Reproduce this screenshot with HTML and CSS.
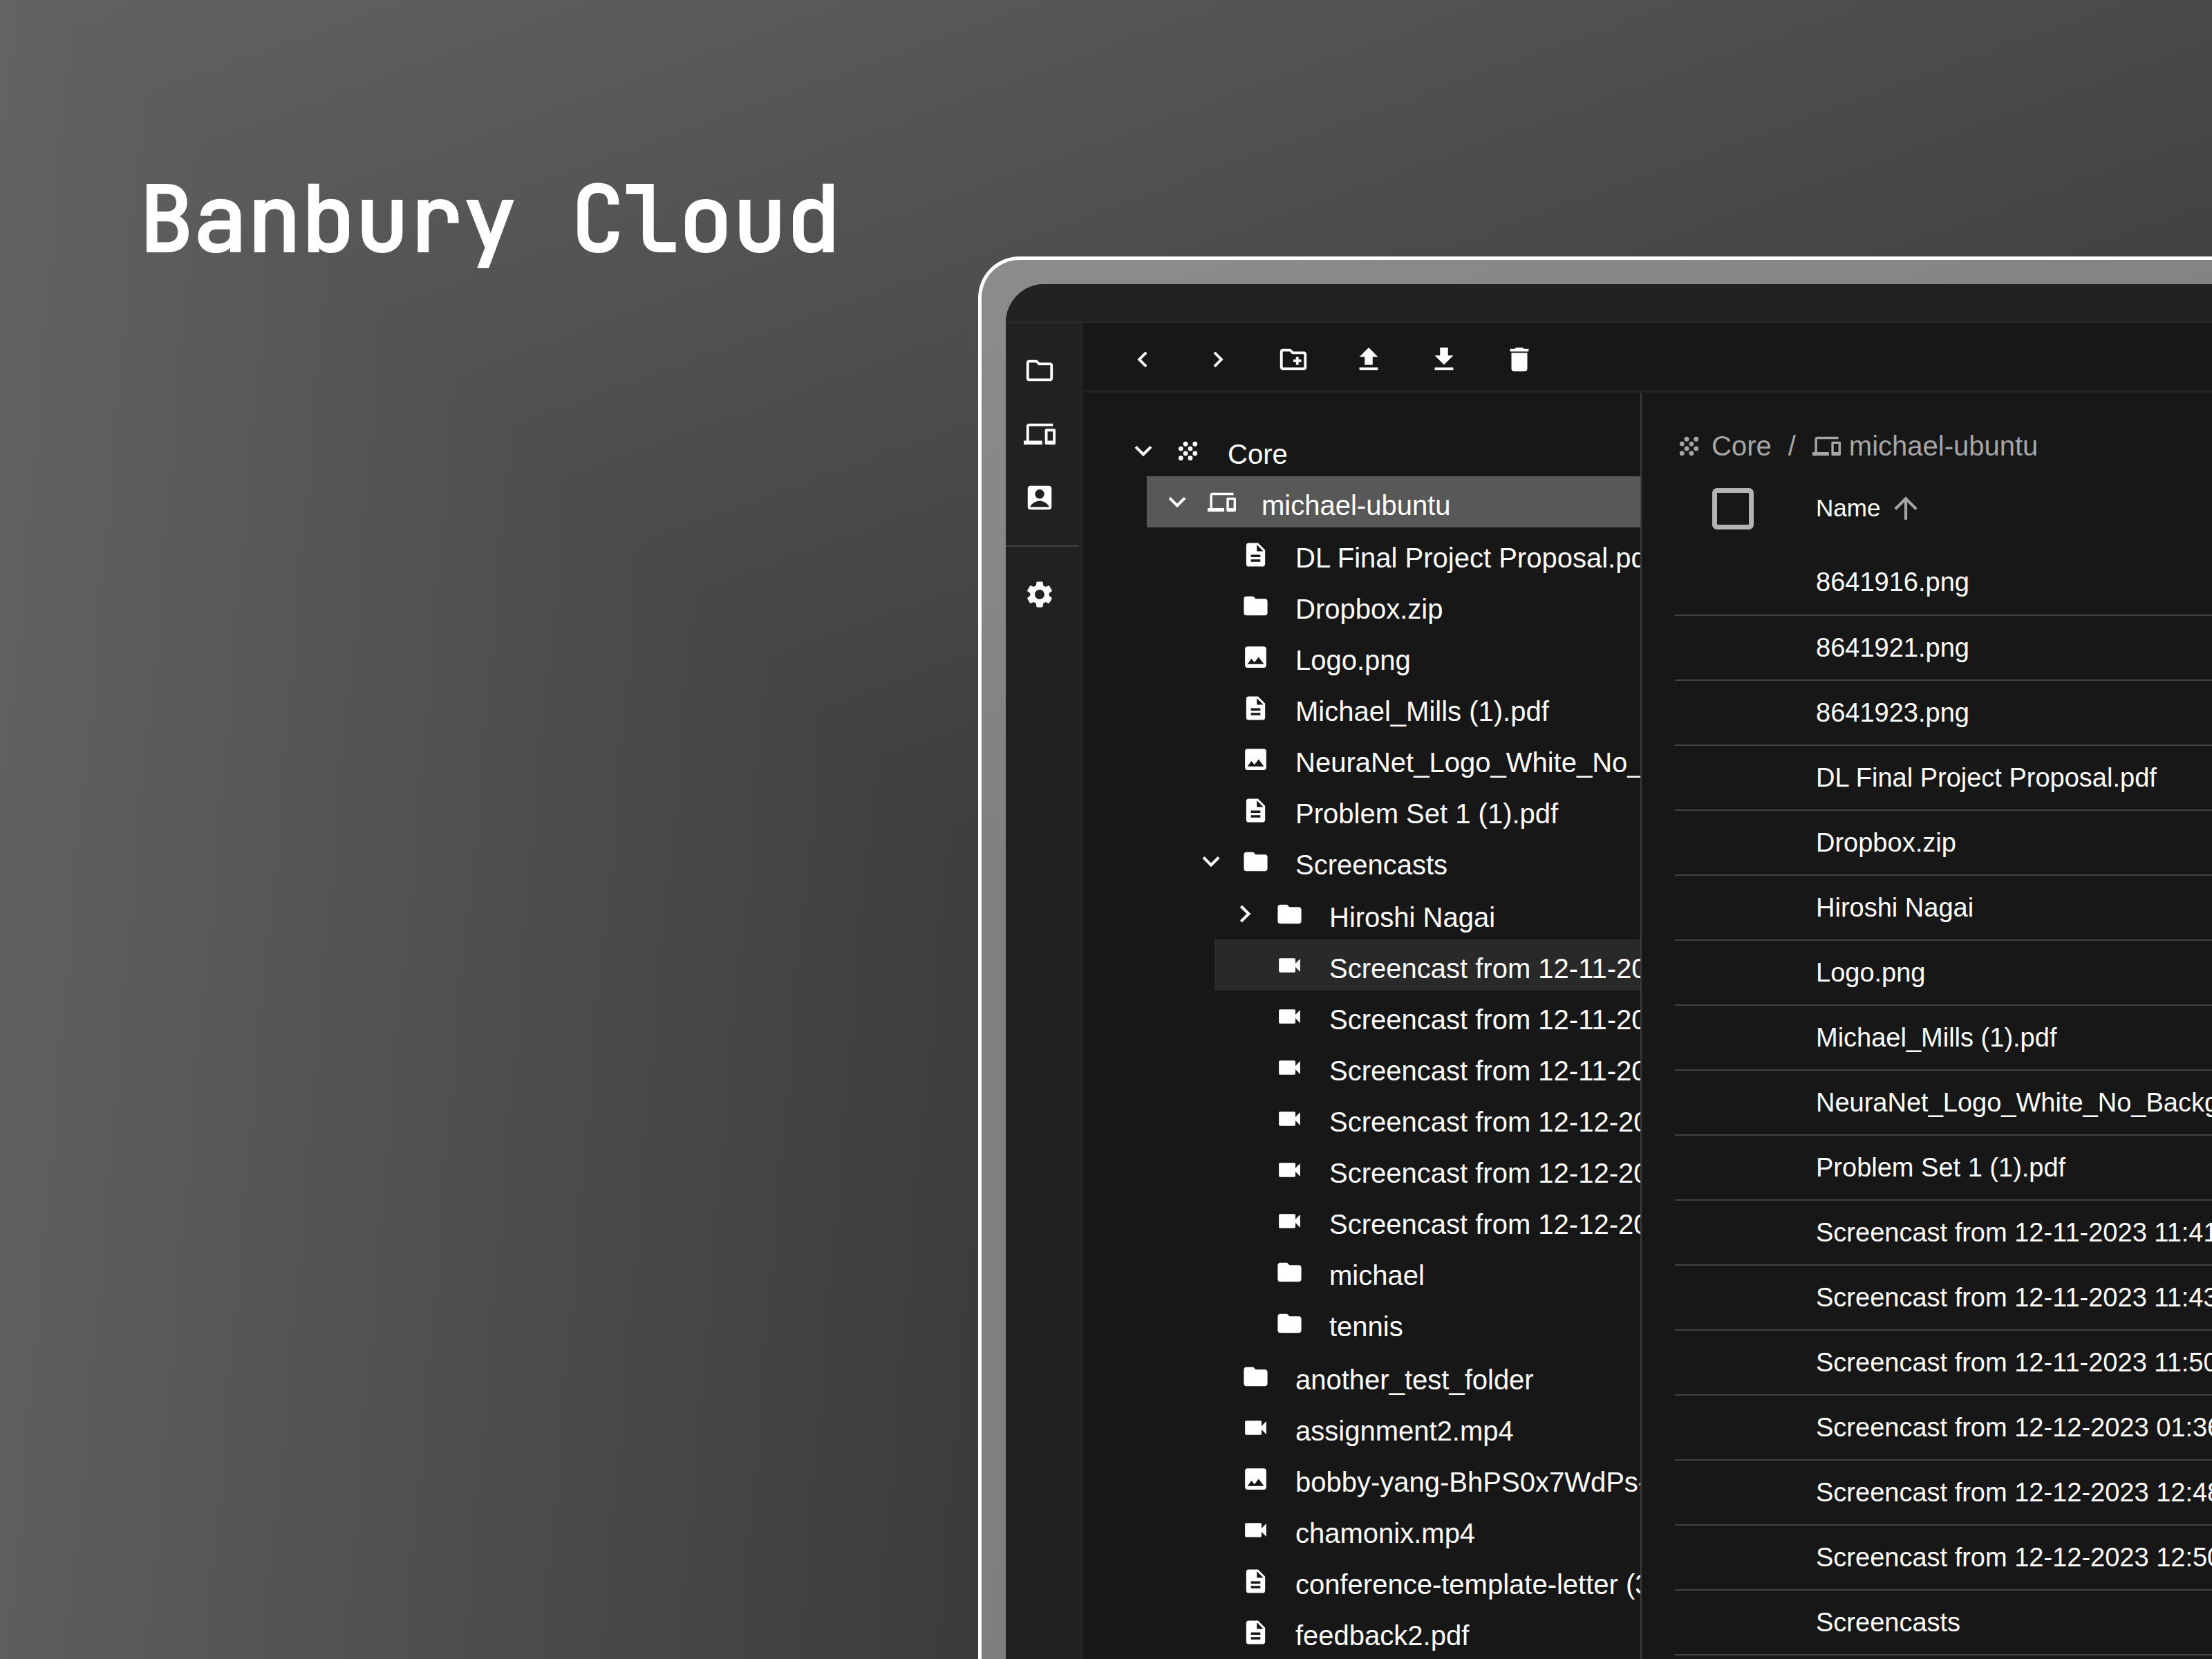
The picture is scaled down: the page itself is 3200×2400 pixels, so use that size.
FILE: index.html
```html
<!DOCTYPE html>
<html lang="en">
<head>
<meta charset="utf-8">
<title>Banbury Cloud</title>
<link rel="stylesheet" href="styles.css">
</head>
<body>
<svg class="sprite" aria-hidden="true">
  <symbol id="folder-outline" viewBox="0 0 24 24"><path d="M9.17 6l2 2H20v10H4V6h5.17M10 4H4c-1.1 0-1.99.9-1.99 2L2 18c0 1.1.9 2 2 2h16c1.1 0 2-.9 2-2V8c0-1.1-.9-2-2-2h-8l-2-2z"/></symbol>
  <symbol id="devices" viewBox="0 0 24 24"><path d="M4 6h18V4H4c-1.1 0-2 .9-2 2v11H0v3h14v-3H4V6zm19 2h-6c-.55 0-1 .45-1 1v10c0 .55.45 1 1 1h6c.55 0 1-.45 1-1V9c0-.55-.45-1-1-1zm-1 9h-4v-7h4v7z"/></symbol>
  <symbol id="account" viewBox="0 0 24 24"><path fill-rule="evenodd" d="M5 3h14c1.1 0 2 .9 2 2v14c0 1.1-.9 2-2 2H5c-1.1 0-2-.9-2-2V5c0-1.1.9-2 2-2zM12 5.8a3.5 3.5 0 1 0 0 7 3.5 3.5 0 0 0 0-7zM5 19h14v-.6c-1.700-2.500-4.200-3.900-7-3.900s-5.300 1.400-7 3.900z"/></symbol>
  <symbol id="settings" viewBox="0 0 24 24"><path d="M19.140 12.940c.04-.3.06-.61.06-.94 0-.32-.02-.64-.07-.94l2.030-1.580c.18-.14.23-.41.12-.61l-1.920-3.320c-.12-.22-.37-.29-.59-.22l-2.390.96c-.5-.38-1.030-.7-1.620-.94l-.36-2.540c-.04-.24-.24-.41-.48-.41h-3.840c-.24 0-.43.17-.47.41l-.36 2.540c-.59.24-1.130.57-1.620.94l-2.390-.96c-.22-.08-.47 0-.59.22L2.740 8.870c-.12.21-.08.47.12.61l2.030 1.580c-.05.3-.09.63-.09.94s.02.64.07.94l-2.030 1.580c-.18.14-.23.41-.12.61l1.920 3.320c.12.22.37.29.59.22l2.390-.96c.5.38 1.030.7 1.620.94l.36 2.540c.05.24.24.41.48.41h3.840c.24 0 .44-.17.47-.41l.36-2.540c.59-.24 1.130-.56 1.620-.94l2.390.96c.22.08.47 0 .59-.22l1.920-3.320c.12-.22.07-.47-.12-.61l-2.010-1.580zM12 15.600c-1.980 0-3.600-1.620-3.600-3.600s1.620-3.600 3.600-3.600 3.600 1.620 3.600 3.600-1.620 3.600-3.600 3.600z"/></symbol>
  <symbol id="chevron-left" viewBox="0 0 24 24"><path d="M15.41 7.41L14 6l-6 6 6 6 1.410-1.410L10.830 12z"/></symbol>
  <symbol id="chevron-right" viewBox="0 0 24 24"><path d="M10 6L8.590 7.410 13.170 12l-4.580 4.590L10 18l6-6z"/></symbol>
  <symbol id="chevron-down" viewBox="0 0 24 24"><path d="M16.590 8.590L12 13.170 7.410 8.590 6 10l6 6 6-6z"/></symbol>
  <symbol id="folder-add" viewBox="0 0 24 24"><path d="M20 6h-8l-2-2H4c-1.110 0-1.990.89-1.990 2L2 18c0 1.110.89 2 2 2h16c1.110 0 2-.89 2-2V8c0-1.110-.89-2-2-2zm0 12H4V6h5.170l2 2H20v10zm-8-4h2v2h2v-2h2v-2h-2v-2h-2v2h-2z"/></symbol>
  <symbol id="upload" viewBox="0 0 24 24"><path d="M5 20h14v-2H5zm0-10h4v6h6v-6h4l-7-7z"/></symbol>
  <symbol id="download" viewBox="0 0 24 24"><path d="M5 20h14v-2H5zM19 9h-4V3H9v6H5l7 7z"/></symbol>
  <symbol id="trash" viewBox="0 0 24 24"><path d="M6 19c0 1.100.9 2 2 2h8c1.100 0 2-.9 2-2V7H6zM19 4h-3.500l-1-1h-5l-1 1H5v2h14z"/></symbol>
  <symbol id="grain" viewBox="0 0 24 24"><circle cx="10" cy="6" r="2"/><circle cx="18" cy="6" r="2"/><circle cx="6" cy="10" r="2"/><circle cx="14" cy="10" r="2"/><circle cx="10" cy="14" r="2"/><circle cx="18" cy="14" r="2"/><circle cx="6" cy="18" r="2"/><circle cx="14" cy="18" r="2"/></symbol>
  <symbol id="doc" viewBox="0 0 24 24"><path d="M14 2H6c-1.100 0-1.990.9-1.990 2L4 20c0 1.100.89 2 1.990 2H18c1.100 0 2-.9 2-2V8zm2 16H8v-2h8zm0-4H8v-2h8zm-3-5V3.500L18.500 9z"/></symbol>
  <symbol id="folder" viewBox="0 0 24 24"><path d="M10 4H4c-1.100 0-1.990.9-1.990 2L2 18c0 1.100.9 2 2 2h16c1.100 0 2-.9 2-2V8c0-1.100-.9-2-2-2h-8z"/></symbol>
  <symbol id="image" viewBox="0 0 24 24"><path d="M21 19V5c0-1.100-.9-2-2-2H5c-1.100 0-2 .9-2 2v14c0 1.100.9 2 2 2h14c1.100 0 2-.9 2-2zM8.500 13.500l2.500 3.010L14.500 12l4.500 6H5z"/></symbol>
  <symbol id="video" viewBox="0 0 24 24"><path d="M17 10.500V7c0-.55-.45-1-1-1H4c-.55 0-1 .45-1 1v10c0 .55.45 1 1 1h12c.55 0 1-.45 1-1v-3.500l4 4v-11z"/></symbol>
  <symbol id="arrow-up" viewBox="0 0 24 24"><path d="M4 12l1.410 1.410L11 7.830V20h2V7.830l5.580 5.590L20 12l-8-8z"/></symbol>
</svg>
<main class="stage">
  <h1 class="brand">Banbury Cloud</h1>
  <div class="frame">
    <div class="window">
      <header class="titlebar"></header>
      <div class="body">
        <nav class="rail" aria-label="Sections">
          <button class="icon-button" aria-label="Files"><svg class="icon"><use href="#folder-outline"/></svg></button>
          <button class="icon-button" aria-label="Devices"><svg class="icon"><use href="#devices"/></svg></button>
          <button class="icon-button" aria-label="Account"><svg class="icon"><use href="#account"/></svg></button>
          <hr class="rail-divider">
          <button class="icon-button" aria-label="Settings"><svg class="icon"><use href="#settings"/></svg></button>
        </nav>
        <section class="main">
          <div class="toolbar" role="toolbar" aria-label="File actions">
            <button class="icon-button" aria-label="Back"><svg class="icon"><use href="#chevron-left"/></svg></button>
            <button class="icon-button" aria-label="Forward"><svg class="icon"><use href="#chevron-right"/></svg></button>
            <button class="icon-button" aria-label="New folder"><svg class="icon"><use href="#folder-add"/></svg></button>
            <button class="icon-button" aria-label="Upload"><svg class="icon"><use href="#upload"/></svg></button>
            <button class="icon-button" aria-label="Download"><svg class="icon"><use href="#download"/></svg></button>
            <button class="icon-button" aria-label="Delete"><svg class="icon"><use href="#trash"/></svg></button>
          </div>
          <div class="panes">
            <aside class="tree-pane">
              <ul class="tree">
                <li>
                  <div class="node"><svg class="twist"><use href="#chevron-down"/></svg><svg class="kind"><use href="#grain"/></svg><span class="label">Core</span></div>
                  <ul class="branch">
                    <li>
                      <div class="node selected"><svg class="twist"><use href="#chevron-down"/></svg><svg class="kind"><use href="#devices"/></svg><span class="label">michael-ubuntu</span></div>
                      <ul class="branch">
                        <li class="node"><svg class="kind"><use href="#doc"/></svg><span class="label">DL Final Project Proposal.pdf</span></li>
                        <li class="node"><svg class="kind"><use href="#folder"/></svg><span class="label">Dropbox.zip</span></li>
                        <li class="node"><svg class="kind"><use href="#image"/></svg><span class="label">Logo.png</span></li>
                        <li class="node"><svg class="kind"><use href="#doc"/></svg><span class="label">Michael_Mills (1).pdf</span></li>
                        <li class="node"><svg class="kind"><use href="#image"/></svg><span class="label">NeuraNet_Logo_White_No_Background.png</span></li>
                        <li class="node"><svg class="kind"><use href="#doc"/></svg><span class="label">Problem Set 1 (1).pdf</span></li>
                        <li>
                          <div class="node"><svg class="twist"><use href="#chevron-down"/></svg><svg class="kind"><use href="#folder"/></svg><span class="label">Screencasts</span></div>
                          <ul class="branch">
                            <li class="node"><svg class="twist"><use href="#chevron-right"/></svg><svg class="kind"><use href="#folder"/></svg><span class="label">Hiroshi Nagai</span></li>
                            <li class="node hovered"><svg class="kind"><use href="#video"/></svg><span class="label">Screencast from 12-11-2023</span></li>
                            <li class="node"><svg class="kind"><use href="#video"/></svg><span class="label">Screencast from 12-11-2023</span></li>
                            <li class="node"><svg class="kind"><use href="#video"/></svg><span class="label">Screencast from 12-11-2023</span></li>
                            <li class="node"><svg class="kind"><use href="#video"/></svg><span class="label">Screencast from 12-12-2023</span></li>
                            <li class="node"><svg class="kind"><use href="#video"/></svg><span class="label">Screencast from 12-12-2023</span></li>
                            <li class="node"><svg class="kind"><use href="#video"/></svg><span class="label">Screencast from 12-12-2023</span></li>
                            <li class="node"><svg class="kind"><use href="#folder"/></svg><span class="label">michael</span></li>
                            <li class="node"><svg class="kind"><use href="#folder"/></svg><span class="label">tennis</span></li>
                          </ul>
                        </li>
                        <li class="node"><svg class="kind"><use href="#folder"/></svg><span class="label">another_test_folder</span></li>
                        <li class="node"><svg class="kind"><use href="#video"/></svg><span class="label">assignment2.mp4</span></li>
                        <li class="node"><svg class="kind"><use href="#image"/></svg><span class="label">bobby-yang-BhPS0x7WdPs-unsplash.jpg</span></li>
                        <li class="node"><svg class="kind"><use href="#video"/></svg><span class="label">chamonix.mp4</span></li>
                        <li class="node"><svg class="kind"><use href="#doc"/></svg><span class="label">conference-template-letter (3).pdf</span></li>
                        <li class="node"><svg class="kind"><use href="#doc"/></svg><span class="label">feedback2.pdf</span></li>
                      </ul>
                    </li>
                  </ul>
                </li>
              </ul>
            </aside>
            <div class="list-pane">
              <nav class="crumbs" aria-label="Breadcrumb">
                <a class="crumb" href="#core"><svg class="kind"><use href="#grain"/></svg>Core</a>
                <span>/</span>
                <a class="crumb" href="#michael-ubuntu"><svg class="kind"><use href="#devices"/></svg>michael-ubuntu</a>
              </nav>
              <table class="files">
                <thead>
                  <tr>
                    <th class="pick"><input class="check" type="checkbox" aria-label="Select all"></th>
                    <th><button class="sort">Name<svg class="sort-arrow"><use href="#arrow-up"/></svg></button></th>
                  </tr>
                </thead>
                <tbody>
                  <tr><td></td><td>8641916.png</td></tr>
                  <tr><td></td><td>8641921.png</td></tr>
                  <tr><td></td><td>8641923.png</td></tr>
                  <tr><td></td><td>DL Final Project Proposal.pdf</td></tr>
                  <tr><td></td><td>Dropbox.zip</td></tr>
                  <tr><td></td><td>Hiroshi Nagai</td></tr>
                  <tr><td></td><td>Logo.png</td></tr>
                  <tr><td></td><td>Michael_Mills (1).pdf</td></tr>
                  <tr><td></td><td>NeuraNet_Logo_White_No_Background.png</td></tr>
                  <tr><td></td><td>Problem Set 1 (1).pdf</td></tr>
                  <tr><td></td><td>Screencast from 12-11-2023 11:41</td></tr>
                  <tr><td></td><td>Screencast from 12-11-2023 11:43</td></tr>
                  <tr><td></td><td>Screencast from 12-11-2023 11:50</td></tr>
                  <tr><td></td><td>Screencast from 12-12-2023 01:36</td></tr>
                  <tr><td></td><td>Screencast from 12-12-2023 12:48</td></tr>
                  <tr><td></td><td>Screencast from 12-12-2023 12:50</td></tr>
                  <tr><td></td><td>Screencasts</td></tr>
                </tbody>
              </table>
            </div>
          </div>
        </section>
      </div>
    </div>
  </div>
</main>
</body>
</html>
```
FILE: styles.css
```css
* {
  box-sizing: border-box;
}

body {
  margin: 0;
  background: #3c3c3c;
  color: #fff;
  font-family: "Liberation Sans", Arial, sans-serif;
  font-size: 40px;
}

button {
  padding: 0;
  border: 0;
  background: none;
  color: inherit;
  font: inherit;
}

ul {
  margin: 0;
  padding: 0;
  list-style: none;
}

svg {
  display: block;
  flex: none;
  fill: currentColor;
}

.sprite {
  display: none;
}

.stage {
  display: grid;
  grid-template-columns: 202px 1213px minmax(0, 1fr);
  grid-template-rows: 371px minmax(0, 1fr);
  height: 100vh;
  overflow: hidden;
  background:
    linear-gradient(95deg, #636363, #393939 50%),
    linear-gradient(160deg, #626262, #393939 55%);
  background-blend-mode: lighten;
}

.brand {
  grid-column: 2 / 4;
  grid-row: 1 / 2;
  margin: 0;
  padding-top: 240px;
  font-family: "JetBrains Mono", "DejaVu Sans Mono", monospace;
  font-size: 130px;
  font-weight: 400;
  line-height: 152px;
  white-space: nowrap;
  -webkit-text-stroke: 4px #fff;
}

.frame {
  grid-column: 3;
  grid-row: 2;
  display: flex;
  padding: 35px 0 0 35px;
  border: solid #fff;
  border-width: 5px 0 0 5px;
  border-radius: 60px 0 0 0;
  background: rgba(255, 255, 255, 0.35);
}

.window {
  display: flex;
  flex: 1;
  flex-direction: column;
  min-width: 0;
  overflow: hidden;
  border-radius: 56px 0 0 0;
  background: #171717;
}

.titlebar {
  flex: none;
  height: 56px;
  border-bottom: 2px solid #282828;
  background: #222;
}

.body {
  display: flex;
  flex: 1;
  min-height: 0;
}

.rail {
  display: flex;
  flex: none;
  flex-direction: column;
  gap: 46px;
  width: 111px;
  padding-top: 46px;
  border-right: 2px solid #272727;
  background: #212121;
}

.rail .icon-button {
  margin-left: 26px;
}

.rail-divider {
  width: 106px;
  height: 2px;
  margin: 0;
  border: 0;
  background: #404040;
}

.icon-button {
  width: 46px;
  height: 46px;
}

.icon {
  width: 46px;
  height: 46px;
}

.main {
  display: flex;
  flex: 1;
  flex-direction: column;
  min-width: 0;
}

.toolbar {
  display: flex;
  flex: none;
  gap: 63px;
  padding: 30px 64px 21px;
  border-bottom: 4px solid #222;
}

.panes {
  display: flex;
  flex: 1;
  min-height: 0;
}

.tree-pane {
  flex: none;
  width: 809px;
  padding: 47px 0 0 44px;
  overflow: hidden;
  border-right: 2px solid #3c3c3c;
}

.branch {
  padding-left: 49px;
}

.branch .branch {
  padding-top: 2px;
  padding-bottom: 3px;
}

.node {
  display: grid;
  grid-template-columns: 50px 41px 1fr;
  align-items: center;
  column-gap: 19px;
  height: 74px;
  padding-left: 19px;
  overflow: hidden;
  white-space: nowrap;
}

.selected {
  background: #585858;
}

.hovered {
  background: #292929;
}

.twist {
  grid-column: 1;
  width: 50px;
  height: 50px;
}

.kind {
  grid-column: 2;
  width: 41px;
  height: 41px;
}

.label {
  grid-column: 3;
  padding: 9px 0 0 18px;
  line-height: 46px;
}

.list-pane {
  flex: 1;
  min-width: 0;
  padding-left: 48px;
  overflow: hidden;
}

.crumbs {
  display: flex;
  align-items: center;
  gap: 24px;
  padding: 54px 0 12px;
  color: #a6a6a6;
  line-height: 46px;
}

.crumb {
  display: flex;
  align-items: center;
  gap: 12px;
  color: inherit;
  text-decoration: none;
}

.files {
  width: 100%;
  table-layout: fixed;
  border-collapse: collapse;
  font-size: 38px;
}

.files th {
  height: 116px;
  padding: 0 0 4px;
  font-weight: 400;
  text-align: left;
}

.files td {
  height: 94px;
  padding: 0;
  border-bottom: 2px solid #424242;
  white-space: nowrap;
}

.files .pick {
  width: 204px;
  padding-left: 54px;
}

.check {
  display: block;
  width: 60px;
  height: 60px;
  margin: 0;
  border: 7px solid #b3b3b3;
  border-radius: 7px;
  appearance: none;
}

.sort {
  display: flex;
  align-items: center;
  gap: 12px;
  padding-bottom: 2px;
  font-size: 35px;
}

.sort-arrow {
  width: 50px;
  height: 50px;
  color: #a3a3a3;
}
```
